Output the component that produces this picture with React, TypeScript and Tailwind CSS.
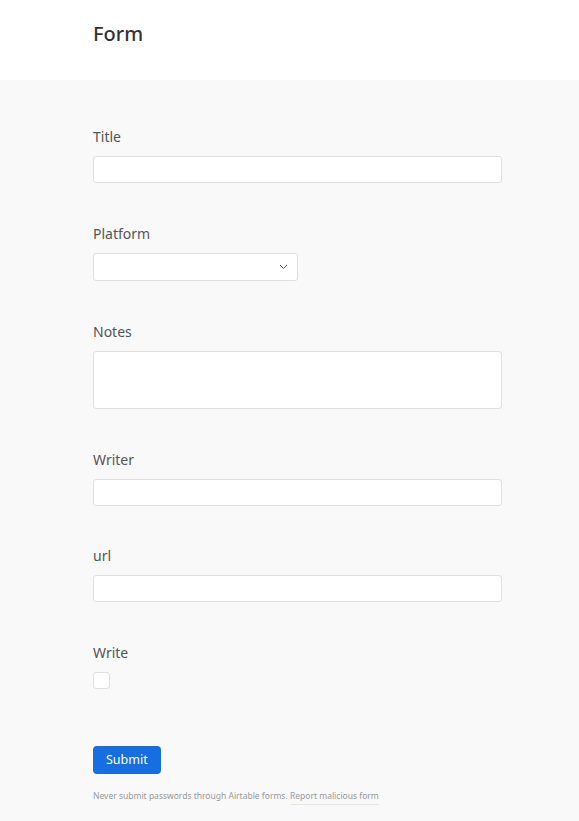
import React from "react";

function Label({ children }: { children: React.ReactNode }) {
  return <div className="h-5 text-[14px] leading-5 text-[#555] mb-[9px]">{children}</div>;
}

export default function App() {
  return (
    <div className="min-h-[821px] bg-[#f9f9f9]" style={{ fontFamily: '"Noto Sans", "Open Sans", sans-serif' }}>
      <header className="h-[80px] bg-white flex items-center px-[93px]">
        <h1 className="text-[20px] font-medium text-[#333] leading-none -mt-[12px]">Form</h1>
      </header>
      <main className="px-[93px] pt-[47px] pb-4">
        <div className="w-[409px]">
          <div className="mb-[41px]">
            <Label>Title</Label>
            <div className="h-[27px] bg-white border border-[#e0e0e0] rounded-[3px]" />
          </div>
          <div className="mb-[41px]">
            <Label>Platform</Label>
            <div className="h-[28px] w-[205px] bg-white border border-[#e0e0e0] rounded-[3px] flex items-center justify-end pr-[9px]">
              <svg width="9" height="6" viewBox="0 0 9 6" fill="none" stroke="#555" strokeWidth="1">
                <path d="M1 1l3.5 3.5L8 1" />
              </svg>
            </div>
          </div>
          <div className="mb-[41px]">
            <Label>Notes</Label>
            <div className="h-[58px] bg-white border border-[#e0e0e0] rounded-[3px]" />
          </div>
          <div className="mb-[40px]">
            <Label>Writer</Label>
            <div className="h-[27px] bg-white border border-[#e0e0e0] rounded-[3px]" />
          </div>
          <div className="mb-[41px]">
            <Label>url</Label>
            <div className="h-[27px] bg-white border border-[#e0e0e0] rounded-[3px]" />
          </div>
          <div className="mb-[57px]">
            <Label>Write</Label>
            <div className="h-[17px] w-[17px] bg-white border border-[#e0e0e0] rounded-[3px]" />
          </div>
          <button className="h-[28px] px-[13px] bg-[#166ee1] rounded-[4px] text-white text-[12.5px] leading-none">
            Submit
          </button>
          <div className="mt-[16px] text-[8.5px] text-[#9a9a9a] leading-[12px]">
            Never submit passwords through Airtable forms.{" "}
            <span className="border-b border-[#e6e6e6] pb-[3px]">Report malicious form</span>
          </div>
        </div>
      </main>
    </div>
  );
}
